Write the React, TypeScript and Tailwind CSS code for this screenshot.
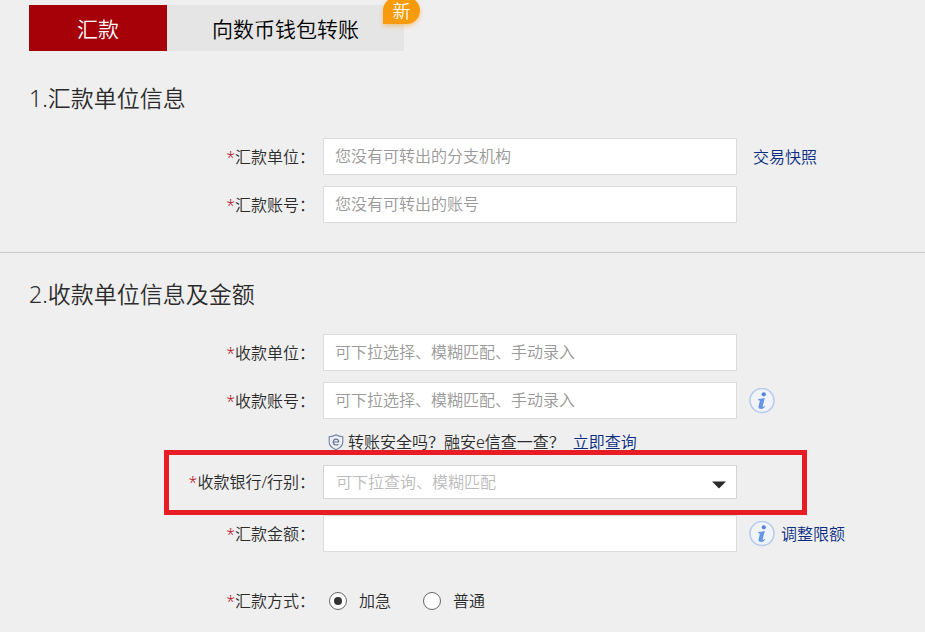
import { useState } from "react";
import type { ReactNode } from "react";
import clsx from "clsx";

const FIELD =
  "w-full border border-[#dcdcdc] bg-white px-[11px] text-base leading-6 text-[#333] outline-none placeholder:text-[#999] focus:border-[#8aa8d8]";

const LINK = "shrink-0 text-[#0a2d82] hover:underline";

const InfoIcon = () => (
  <svg viewBox="0 0 26 26" className="size-[26px]" aria-hidden="true">
    <circle cx="13" cy="12.500" r="12" fill="#f0f3f8" stroke="#b7cbec" strokeWidth="1.600" />
    <circle cx="14.8" cy="6.300" r="2.100" fill="#5585d8" />
    <path
      d="M9.300 10.900c2-.1 4-.4 6.500-.9l-2 7.700c-.2.9.1 1.200.7 1 .4-.1.800-.4 1.200-.8l.6.700c-1.100 1.500-2.500 2.300-4.200 2.300-2.100 0-2.900-1.100-2.500-2.800l1.200-4.800c.2-.8-.1-1.100-.9-1.100h-.8z"
      fill="#6595e4"
    />
  </svg>
);

const ShieldIcon = () => (
  <svg viewBox="0 0 16 17" fill="none" className="h-[17px] w-4 shrink-0" aria-hidden="true">
    <path
      d="M8 .8c2 1.300 4.300 1.900 6.800 2v5.300c0 3.600-2.600 6-6.800 7.700-4.200-1.700-6.800-4.100-6.800-7.700V2.800C3.700 2.700 6 2.100 8 .8z"
      stroke="#7180a5"
      strokeWidth="1.100"
    />
    <path
      d="M5.300 8h5.400c0-1.800-1-2.900-2.700-2.900S5.300 6.300 5.300 8.100s1.100 2.900 2.800 2.900c.9 0 1.700-.3 2.300-.8"
      stroke="#66759c"
      strokeWidth="1.200"
    />
  </svg>
);

const InfoButton = ({ label }: { label: string }) => (
  <button type="button" aria-label={label} className="ml-3 shrink-0 cursor-pointer">
    <InfoIcon />
  </button>
);

interface RowLabelProps {
  text: string;
  htmlFor?: string;
  id?: string;
}

const RowLabel = ({ text, htmlFor, id }: RowLabelProps) => {
  const Tag = htmlFor ? "label" : "span";
  return (
    <Tag id={id} htmlFor={htmlFor} className="w-[315px] shrink-0 text-right">
      <span className="text-[#b5152b]">*</span>
      {text}：
    </Tag>
  );
};

interface TextRowProps {
  id: string;
  label: string;
  placeholder?: string;
  children?: ReactNode;
}

const TextRow = ({ id, label, placeholder, children }: TextRowProps) => (
  <div className="flex items-center">
    <RowLabel text={label} htmlFor={id} />
    <div className="ml-2 max-w-[414px] flex-1">
      <input id={id} type="text" placeholder={placeholder} className={clsx(FIELD, "block h-[37px] pb-0.5")} />
    </div>
    {children}
  </div>
);

const BankRow = () => (
  <div className="relative mb-[5px] flex items-center">
    <RowLabel text="收款银行/行别" htmlFor="bank" />
    <div className="relative ml-2 max-w-[414px] flex-1">
      <select
        id="bank"
        defaultValue=""
        className="block h-[34px] w-full appearance-none border border-[#d4d4d4] bg-white px-3 text-base leading-6 text-[#bbb] outline-none"
      >
        <option value="">可下拉查询、模糊匹配</option>
      </select>
      <svg
        viewBox="0 0 14 8"
        className="pointer-events-none absolute top-4 right-[11px] h-2 w-3.5"
        aria-hidden="true"
      >
        <path d="M0 .5h14L7 7.500z" fill="#2b2b2b" />
      </svg>
    </div>
    {/* Attention frame around the bank field */}
    <div className="pointer-events-none absolute -top-[15px] left-[164px] h-[65px] w-[643px] border-5 border-[#e81c24]" />
  </div>
);

const SPEEDS = [
  { value: "urgent", label: "加急" },
  { value: "normal", label: "普通" },
];

const SpeedRow = () => {
  const [speed, setSpeed] = useState("urgent");
  return (
    <div className="mt-[26px] flex items-center" role="radiogroup" aria-labelledby="speed-label">
      <RowLabel id="speed-label" text="汇款方式" />
      <div className="ml-3.5 flex gap-8">
        {SPEEDS.map((s) => (
          <label key={s.value} className="flex items-center gap-3">
            <input
              type="radio"
              name="speed"
              value={s.value}
              checked={speed === s.value}
              onChange={() => setSpeed(s.value)}
              className="flex size-[18px] appearance-none items-center justify-center rounded-full border border-[#666] bg-white before:size-2 before:rounded-full before:bg-transparent checked:before:bg-[#333]"
            />
            {s.label}
          </label>
        ))}
      </div>
    </div>
  );
};

const SectionTitle = ({ children }: { children: ReactNode }) => (
  <h2 className="pl-[29px] text-[23px] leading-[30px]">{children}</h2>
);

export default function App() {
  return (
    <main
      lang="zh-CN"
      className="min-h-screen bg-[#efefef] pt-[5px] pb-5 font-['Noto_Sans','Noto_Sans_CJK_SC',sans-serif] text-base leading-6 font-[350] text-[#2b2b2b]"
    >
      <nav className="ml-[29px] flex text-[21px]">
        <button type="button" className="h-[46px] w-[138px] bg-[#a60009] pt-0.5 text-white">
          汇款
        </button>
        <button type="button" className="relative h-[46px] w-[237px] bg-[#e5e5e5] pt-0.5 text-black">
          向数币钱包转账
          <span className="absolute -top-2 -right-4 flex h-[27px] w-[37px] items-center justify-center rounded-full rounded-bl-none bg-[#f79b0c] text-lg text-white shadow-[0_2px_4px_rgba(247,155,12,0.45)]">
            新
          </span>
        </button>
      </nav>

      <section className="pt-8 pb-[29px]">
        <SectionTitle>1.汇款单位信息</SectionTitle>
        <div className="mt-[25px] flex flex-col gap-[11px]">
          <TextRow id="payer" label="汇款单位" placeholder="您没有可转出的分支机构">
            <a href="#snapshot" className={clsx(LINK, "ml-4")}>
              交易快照
            </a>
          </TextRow>
          <TextRow id="payer-account" label="汇款账号" placeholder="您没有可转出的账号" />
        </div>
      </section>

      <section className="border-t border-[#c9c9c9] pt-[26px]">
        <SectionTitle>2.收款单位信息及金额</SectionTitle>
        <div className="mt-[25px] flex flex-col gap-[11px]">
          <TextRow id="payee" label="收款单位" placeholder="可下拉选择、模糊匹配、手动录入" />
          <TextRow id="payee-account" label="收款账号" placeholder="可下拉选择、模糊匹配、手动录入">
            <InfoButton label="收款账号说明" />
          </TextRow>
          <p className="ml-[328px] flex items-center gap-1">
            <ShieldIcon />
            <span>转账安全吗？融安e信查一查？</span>
            <a href="#check" className={clsx(LINK, "ml-1")}>
              立即查询
            </a>
          </p>
          <BankRow />
          <TextRow id="amount" label="汇款金额">
            <InfoButton label="汇款金额说明" />
            <a href="#limit" className={clsx(LINK, "ml-1.5")}>
              调整限额
            </a>
          </TextRow>
          <SpeedRow />
        </div>
      </section>
    </main>
  );
}
